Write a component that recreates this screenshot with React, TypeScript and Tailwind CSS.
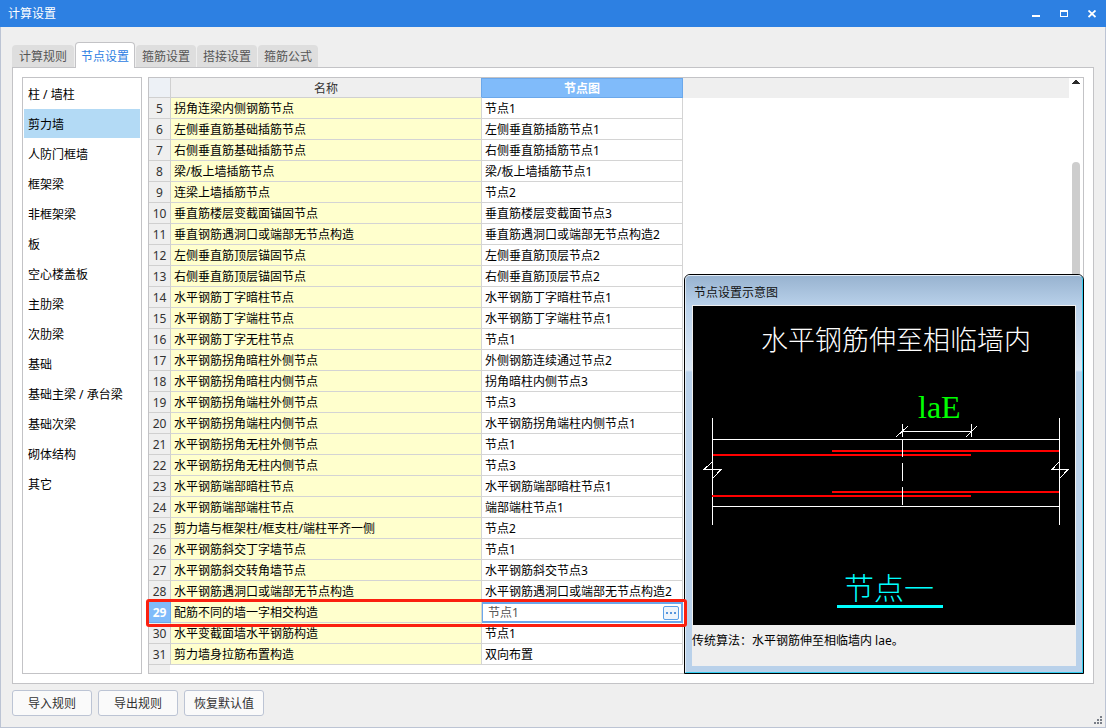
import React, { useState } from 'react';
import clsx from 'clsx';

const TABS = ['计算规则', '节点设置', '箍筋设置', '搭接设置', '箍筋公式'];

const CATEGORIES = [
    '柱 / 墙柱',
    '剪力墙',
    '人防门框墙',
    '框架梁',
    '非框架梁',
    '板',
    '空心楼盖板',
    '主肋梁',
    '次肋梁',
    '基础',
    '基础主梁 / 承台梁',
    '基础次梁',
    '砌体结构',
    '其它',
];

const FIRST_ROW = 5;
const ACTIVE_ROW = 29;

const ROWS = [
    ['拐角连梁内侧钢筋节点', '节点1'],
    ['左侧垂直筋基础插筋节点', '左侧垂直筋插筋节点1'],
    ['右侧垂直筋基础插筋节点', '右侧垂直筋插筋节点1'],
    ['梁/板上墙插筋节点', '梁/板上墙插筋节点1'],
    ['连梁上墙插筋节点', '节点2'],
    ['垂直筋楼层变截面锚固节点', '垂直筋楼层变截面节点3'],
    ['垂直钢筋遇洞口或端部无节点构造', '垂直筋遇洞口或端部无节点构造2'],
    ['左侧垂直筋顶层锚固节点', '左侧垂直筋顶层节点2'],
    ['右侧垂直筋顶层锚固节点', '右侧垂直筋顶层节点2'],
    ['水平钢筋丁字暗柱节点', '水平钢筋丁字暗柱节点1'],
    ['水平钢筋丁字端柱节点', '水平钢筋丁字端柱节点1'],
    ['水平钢筋丁字无柱节点', '节点1'],
    ['水平钢筋拐角暗柱外侧节点', '外侧钢筋连续通过节点2'],
    ['水平钢筋拐角暗柱内侧节点', '拐角暗柱内侧节点3'],
    ['水平钢筋拐角端柱外侧节点', '节点3'],
    ['水平钢筋拐角端柱内侧节点', '水平钢筋拐角端柱内侧节点1'],
    ['水平钢筋拐角无柱外侧节点', '节点1'],
    ['水平钢筋拐角无柱内侧节点', '节点3'],
    ['水平钢筋端部暗柱节点', '水平钢筋端部暗柱节点1'],
    ['水平钢筋端部端柱节点', '端部端柱节点1'],
    ['剪力墙与框架柱/框支柱/端柱平齐一侧', '节点2'],
    ['水平钢筋斜交丁字墙节点', '节点1'],
    ['水平钢筋斜交转角墙节点', '水平钢筋斜交节点3'],
    ['水平钢筋遇洞口或端部无节点构造', '水平钢筋遇洞口或端部无节点构造2'],
    ['配筋不同的墙一字相交构造', '节点1'],
    ['水平变截面墙水平钢筋构造', '节点1'],
    ['剪力墙身拉筋布置构造', '双向布置'],
];

function TitleBar() {
    return (
        <header className="flex h-[27px] items-center justify-between bg-[#2d80e2] pr-[10px] pl-2 text-white">
            <h1>计算设置</h1>
            <div className="flex gap-5">
                <button type="button" aria-label="最小化">
                    <svg width="8" height="8" shapeRendering="crispEdges">
                        <path d="M0 5h8v2H0z" fill="#fff" />
                    </svg>
                </button>
                <button type="button" aria-label="最大化">
                    <svg width="8" height="8" shapeRendering="crispEdges">
                        <path
                            d="M0 0h8v7H0zM1 2v4h6V2z"
                            fill="#fff"
                            fillRule="evenodd"
                        />
                    </svg>
                </button>
                <button type="button" aria-label="关闭">
                    <svg width="8" height="8">
                        <path
                            d="M0.5 0.5l7 6.5M7.5 0.5l-7 6.5"
                            stroke="#fff"
                            strokeWidth="1.8"
                        />
                    </svg>
                </button>
            </div>
        </header>
    );
}

function NodeTable() {
    return (
        <table className="w-[534px] table-fixed border-separate border-spacing-0">
            <colgroup>
                <col className="w-[22px]" />
                <col className="w-[311px]" />
                <col className="w-[201px]" />
            </colgroup>
            <thead>
                <tr className="h-5">
                    <th className="border-r border-b border-[#d0d0d0] bg-[#edf1f6] p-0" />
                    <th className="border-r border-b border-r-[#6ba8eb] border-b-[#d0d0d0] bg-[#efefef] p-0 pt-0.5 leading-[17px] font-normal text-[#333]">
                        名称
                    </th>
                    <th className="border-t border-r border-b border-[#6ba8eb] bg-[#80bbfa] p-0 pt-0.5 leading-4 font-bold text-white">
                        节点图
                    </th>
                </tr>
            </thead>
            <tbody>
                {ROWS.map(([name, node], index) => {
                    const rowNo = FIRST_ROW + index;
                    const active = rowNo === ACTIVE_ROW;

                    return (
                        <tr key={rowNo} className="relative h-[21px]">
                            <th
                                className={clsx(
                                    'border-r border-b p-0 pt-0.5 text-center leading-[18px]',
                                    active
                                        ? 'border-[#6ba8eb] bg-[#80bbfa] font-bold text-white'
                                        : 'border-[#d0d0d0] bg-[#efefef] font-normal text-[#333]',
                                )}
                            >
                                {rowNo}
                            </th>
                            <td className="border-r border-b border-[#d4d4d4] bg-[#ffffcd] p-0 pt-0.5 pl-[3px] leading-[18px] whitespace-nowrap">
                                {name}
                            </td>
                            {active ? (
                                <td className="border border-l-0 border-[#6ba8eb] bg-white p-0">
                                    <div className="flex h-[19px] items-center border border-[#6ba8eb] pr-0.5 pl-1">
                                        <input
                                            aria-label={name}
                                            defaultValue={node}
                                            className="h-4 min-w-0 flex-1 pl-px text-[#555] outline-none"
                                        />
                                        <button
                                            type="button"
                                            aria-label="选择节点"
                                            className="flex h-[14px] w-4 items-center justify-center gap-0.5 rounded-[2px] border border-[#5a9fe6] bg-[#eef4fb]"
                                        >
                                            <span className="size-0.5 bg-[#5795dc]" />
                                            <span className="size-0.5 bg-[#5795dc]" />
                                            <span className="size-0.5 bg-[#5795dc]" />
                                        </button>
                                    </div>
                                    <div className="pointer-events-none absolute -top-[3px] -right-1 -bottom-1 -left-[3px] z-20 rounded-[3px] border-3 border-[#fb2010]" />
                                </td>
                            ) : (
                                <td className="border-r border-b border-[#d4d4d4] bg-white p-0 pt-0.5 pl-[3px] leading-[18px] whitespace-nowrap">
                                    {node}
                                </td>
                            )}
                        </tr>
                    );
                })}
            </tbody>
        </table>
    );
}

function NodeDiagram() {
    return (
        <svg
            viewBox="0 0 382 319"
            className="block h-[319px] w-full bg-black"
            fill="none"
        >
            <text
                x="68"
                y="44"
                fill="#fff"
                fontSize="27"
                fontWeight="300"
                fontFamily='"Noto Sans CJK SC", serif'
            >
                水平钢筋伸至相临墙内
            </text>
            <text
                x="225"
                y="112"
                fill="#0f0"
                fontSize="32"
                fontFamily='"Liberation Serif", serif'
            >
                laE
            </text>
            <g stroke="#fff" shapeRendering="crispEdges">
                <path d="M19.5 112v107M366.5 112v107M19 133.5h348M19 200.5h348" />
                <path d="M209.5 118v13M278.5 118v13M209 125.5h70" />
                <path d="M203 131l12-11M273 131l11-11" />
            </g>
            <g fill="#f00" shapeRendering="crispEdges">
                <path d="M139 144h227v2H139zM20 148h258v2H20z" />
                <path d="M139 185h227v2H139zM19 189h259v2H19z" />
            </g>
            <g stroke="#fff" shapeRendering="crispEdges">
                <path d="M209.5 133v18M209.5 157v18M209.5 181v18" />
                <path d="M19 156l-8 7.5h17l-8 8.5" />
                <path d="M366 156l-7 7.5h16l-8 8.5" />
            </g>
            <text
                x="151"
                y="293"
                fill="#0ff"
                fontSize="30"
                fontWeight="300"
                fontFamily='"Noto Sans CJK SC", serif'
            >
                节点一
            </text>
            <path d="M144 299h106v3H144z" fill="#0ff" />
        </svg>
    );
}

function DiagramWindow() {
    return (
        <section className="absolute right-0 bottom-0 z-10 w-[400px] rounded-t-md border border-black bg-[#b9d1ea]">
            <div className="rounded-t-[5px] border border-t-white/60 border-r-[#35cdf0] border-b-[#35cdf0] border-l-white/60 bg-[linear-gradient(#98b3d0_0px,#b9d1ea_30px,#dce8f5_94px,#b9d1ea_96px)] px-1.5 pb-1.5">
                <h2 className="h-[29px] pt-[7px] pl-0.5 leading-5 text-[#111]">
                    节点设置示意图
                </h2>
                <div className="border border-b-0 border-[#efefef]">
                    <NodeDiagram />
                </div>
                <p className="h-[41px] bg-[#efefef] pt-1.5 leading-5">
                    传统算法：水平钢筋伸至相临墙内 lae。
                </p>
            </div>
        </section>
    );
}

function ScrollBar() {
    return (
        <div className="flex w-[14px] flex-col items-center gap-[78px] bg-white pt-0.5">
            <svg width="8" height="4" shapeRendering="crispEdges">
                <path d="M3 0h2v1h1v1h1v1h1v1H0V3h1V2h1V1h1z" fill="#2b2b2b" />
            </svg>
            <div className="h-80 w-2 rounded-full bg-[#cdcdcd]" />
        </div>
    );
}

function App() {
    const [tab, setTab] = useState('节点设置');
    const [category, setCategory] = useState('剪力墙');

    return (
        <div className="flex min-h-screen flex-col bg-[#efefef] font-['Noto_Sans','Noto_Sans_CJK_SC',sans-serif] text-xs text-black">
            <TitleBar />

            <main className="relative flex flex-1 flex-col border border-t-0 border-[#bcc4d4] px-[11px] pt-[15px] pb-[11px]">
                <div role="tablist" className="z-10 -mb-px flex items-end gap-px">
                    {TABS.map((item, index) => (
                        <button
                            key={item}
                            type="button"
                            role="tab"
                            aria-selected={item === tab}
                            onClick={() => setTab(item)}
                            className={clsx(
                                'rounded-t-sm pt-0.5 text-center',
                                index === 0 ? 'w-[62px]' : 'w-[60px]',
                                item === tab
                                    ? 'h-[26px] border border-b-0 border-[#c3c3c6] bg-white text-[#2d80e2]'
                                    : 'mb-px h-[22px] bg-[#dedede] text-[#555]',
                            )}
                        >
                            {item}
                        </button>
                    ))}
                </div>

                <div className="flex flex-1 gap-1.5 border border-[#c3c3c6] bg-white p-[9px]">
                    <nav className="flex w-[120px] flex-col gap-px border border-[#c3c3c6] px-px pt-px">
                        {CATEGORIES.map((item) => (
                            <button
                                key={item}
                                type="button"
                                onClick={() => setCategory(item)}
                                className={clsx(
                                    'h-[29px] pt-0.5 pl-1 text-left whitespace-nowrap',
                                    item === category && 'bg-[#b3daf5]',
                                )}
                            >
                                {item}
                            </button>
                        ))}
                    </nav>

                    <div className="relative flex flex-1">
                        <div className="flex flex-1 border border-[#c3c3c6]">
                            <div className="flex flex-col">
                                <NodeTable />
                                <div className="min-h-2 w-[21px] flex-1 bg-[#efefef]" />
                            </div>
                            <div className="flex-1">
                                <div className="h-5 bg-[#efefef]" />
                            </div>
                            <ScrollBar />
                        </div>
                        <DiagramWindow />
                    </div>
                </div>

                <div className="mt-1.5 flex gap-1.5">
                    {['导入规则', '导出规则', '恢复默认值'].map((label) => (
                        <button
                            key={label}
                            type="button"
                            className="h-[26px] w-20 rounded-[3px] border border-[#bcc4d4] bg-[#fafafa] pt-0.5 text-[#333]"
                        >
                            {label}
                        </button>
                    ))}
                </div>

                <svg
                    width="8"
                    height="8"
                    className="absolute right-[3px] bottom-[3px]"
                    shapeRendering="crispEdges"
                >
                    <path
                        d="M6 0h2v2H6zM3 3h2v2H3zM6 3h2v2H6zM0 6h2v2H0zM3 6h2v2H3zM6 6h2v2H6z"
                        fill="#7a7f88"
                    />
                </svg>
            </main>
        </div>
    );
}

export default App;
